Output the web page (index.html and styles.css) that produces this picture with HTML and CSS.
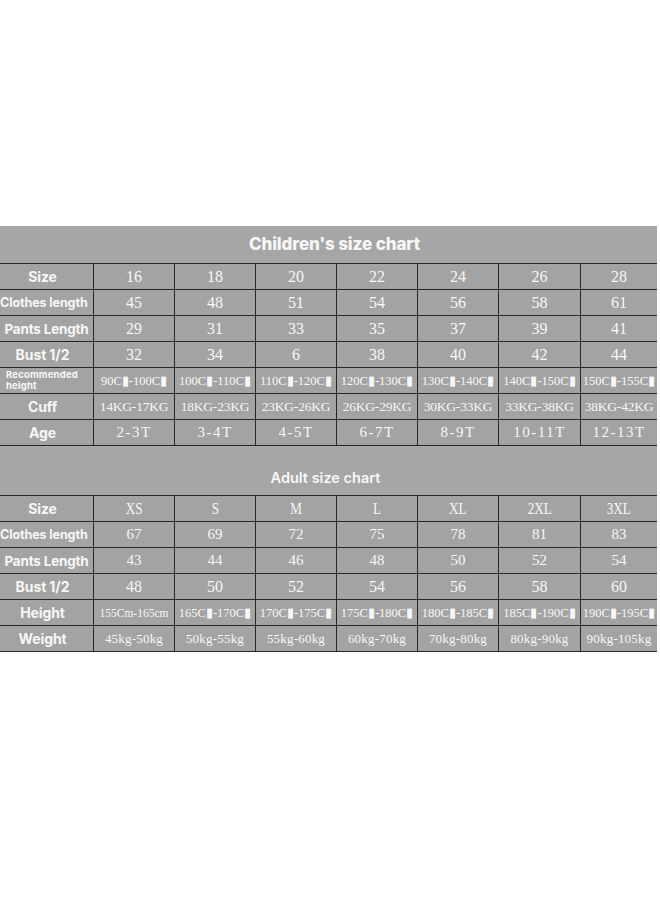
FILE: index.html
```html
<!DOCTYPE html>
<html>
<head>
<meta charset="utf-8">
<link rel="stylesheet" href="styles.css">
</head>
<body>
<div class="sheet">
  <div class="title">Children's size chart</div>
  <div class="grid kids">
    <div class="lab">Size</div><div class="v num">16</div><div class="v num">18</div><div class="v num">20</div><div class="v num">22</div><div class="v num">24</div><div class="v num">26</div><div class="v num">28</div>
    <div class="lab sm">Clothes length</div><div class="v num">45</div><div class="v num">48</div><div class="v num">51</div><div class="v num">54</div><div class="v num">56</div><div class="v num">58</div><div class="v num">61</div>
    <div class="lab pl">Pants Length</div><div class="v num">29</div><div class="v num">31</div><div class="v num">33</div><div class="v num">35</div><div class="v num">37</div><div class="v num">39</div><div class="v num">41</div>
    <div class="lab">Bust 1/2</div><div class="v num">32</div><div class="v num">34</div><div class="v num">6</div><div class="v num">38</div><div class="v num">40</div><div class="v num">42</div><div class="v num">44</div>
    <div class="lab rec">Recommended<br>height</div><div class="v rng">90C▮-100C▮</div><div class="v rng">100C▮-110C▮</div><div class="v rng">110C▮-120C▮</div><div class="v rng">120C▮-130C▮</div><div class="v rng">130C▮-140C▮</div><div class="v rng">140C▮-150C▮</div><div class="v rng">150C▮-155C▮</div>
    <div class="lab">Cuff</div><div class="v kg">14KG-17KG</div><div class="v kg">18KG-23KG</div><div class="v kg">23KG-26KG</div><div class="v kg">26KG-29KG</div><div class="v kg">30KG-33KG</div><div class="v kg">33KG-38KG</div><div class="v kg">38KG-42KG</div>
    <div class="lab">Age</div><div class="v age">2-3T</div><div class="v age">3-4T</div><div class="v age">4-5T</div><div class="v age">6-7T</div><div class="v age">8-9T</div><div class="v age">10-11T</div><div class="v age">12-13T</div>
  </div>
  <div class="title2">Adult size chart</div>
  <div class="grid adult">
    <div class="lab">Size</div><div class="v sz"><span>XS</span></div><div class="v sz"><span>S</span></div><div class="v sz"><span>M</span></div><div class="v sz"><span>L</span></div><div class="v sz"><span>XL</span></div><div class="v sz"><span>2XL</span></div><div class="v sz"><span>3XL</span></div>
    <div class="lab sm">Clothes length</div><div class="v an">67</div><div class="v an">69</div><div class="v an">72</div><div class="v an">75</div><div class="v an">78</div><div class="v an">81</div><div class="v an">83</div>
    <div class="lab pl">Pants Length</div><div class="v an">43</div><div class="v an">44</div><div class="v an">46</div><div class="v an">48</div><div class="v an">50</div><div class="v an">52</div><div class="v an">54</div>
    <div class="lab">Bust 1/2</div><div class="v num">48</div><div class="v num">50</div><div class="v num">52</div><div class="v num">54</div><div class="v num">56</div><div class="v num">58</div><div class="v num">60</div>
    <div class="lab">Height</div><div class="v rng tight">155Cm-165cm</div><div class="v rng">165C▮-170C▮</div><div class="v rng">170C▮-175C▮</div><div class="v rng">175C▮-180C▮</div><div class="v rng">180C▮-185C▮</div><div class="v rng">185C▮-190C▮</div><div class="v rng">190C▮-195C▮</div>
    <div class="lab">Weight</div><div class="v wt">45kg-50kg</div><div class="v wt">50kg-55kg</div><div class="v wt">55kg-60kg</div><div class="v wt">60kg-70kg</div><div class="v wt">70kg-80kg</div><div class="v wt">80kg-90kg</div><div class="v wt">90kg-105kg</div>
  </div>
</div>
</body>
</html>
```
FILE: styles.css
```css
html, body {
  margin: 0;
  padding: 0;
  background: #ffffff;
}
body {
  font-family: "Liberation Serif", serif;
}
.sheet {
  margin-top: 226px;
  width: 657px;
  background: #a6a6a6;
  color: #f7f7f7;
}
.title {
  height: 37px;
  display: flex;
  align-items: center;
  justify-content: center;
  padding-left: 12px;
  padding-bottom: 1px;
  box-sizing: border-box;
  font-family: Inter, "Open Sans", sans-serif;
  font-weight: 800;
  font-size: 17px;
  letter-spacing: -0.1px;
}
.title2 {
  height: 49px;
  box-sizing: border-box;
  padding-top: 23px;
  padding-right: 6px;
  text-align: center;
  font-family: Inter, "Open Sans", sans-serif;
  font-weight: 600;
  font-size: 14.5px;
}
.grid {
  display: grid;
  grid-template-columns: 94px 81px 81px 81px 81px 81px 82px 76px;
  border-top: 1px solid #262626;
}
.grid > div {
  height: 26px;
  box-sizing: border-box;
  border-bottom: 1px solid #262626;
  border-right: 1px solid #262626;
  display: flex;
  align-items: center;
  justify-content: center;
  white-space: nowrap;
  overflow: hidden;
  background: #a3a3a3;
}
.grid > div:nth-child(8n) {
  border-right: 0;
}
.lab {
  font-family: Inter, "Open Sans", sans-serif;
  font-weight: 700;
  font-size: 14px;
  padding-right: 8px;
  letter-spacing: -0.1px;
}
.grid > .lab.pl {
  font-size: 13.5px;
  padding-right: 0;
  letter-spacing: -0.2px;
}
.grid > .lab.sm {
  font-size: 12.5px;
  letter-spacing: -0.1px;
  padding-right: 0;
  justify-content: flex-start;
  padding-left: 0;
}
.grid > .lab.rec {
  flex-direction: column;
  align-items: flex-start;
  justify-content: center;
  font-size: 9.5px;
  line-height: 10.5px;
  padding-left: 6px;
  padding-right: 0;
  text-align: left;
  letter-spacing: 0.2px;
  white-space: normal;
}
.num {
  font-size: 16px;
}
.an {
  font-size: 15px;
}
.sz {
  font-size: 16px;
}
.sz span {
  display: inline-block;
  transform: scaleX(0.82);
}
.rng {
  font-size: 12.5px;
}
.grid > .tight {
  font-size: 11.5px;
}
.wt {
  font-size: 13px;
  letter-spacing: 0.2px;
}
.kg {
  font-size: 13.5px;
  letter-spacing: -0.2px;
}
.age {
  font-size: 15px;
  letter-spacing: 1.5px;
}
```
